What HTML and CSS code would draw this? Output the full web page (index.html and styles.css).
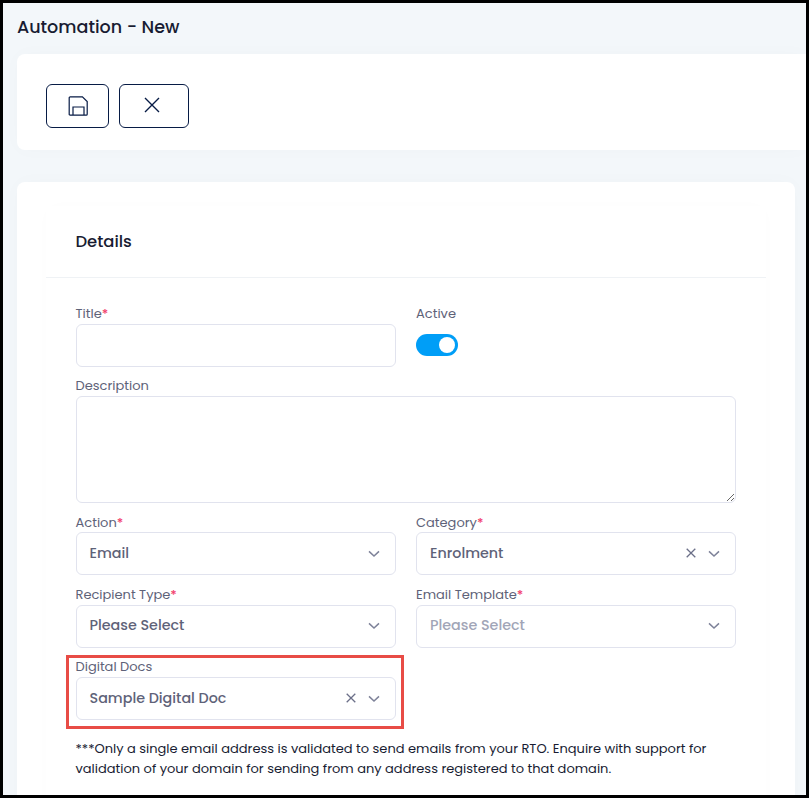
FILE: index.html
```html
<!DOCTYPE html>
<html lang="en">
<head>
<meta charset="utf-8">
<title>Automation - New</title>
<link rel="stylesheet" href="styles.css">
</head>
<body>
<svg class="defs" width="0" height="0">
  <symbol id="chevron" viewBox="0 0 12 8"><path d="M1 1.4 6 6 11 1.4" fill="none" stroke="currentColor" stroke-width="1.5"/></symbol>
  <symbol id="clear" viewBox="0 0 10 10"><path d="M.7.7 9.3 9.3M9.3.7.7 9.3" fill="none" stroke="currentColor" stroke-width="1.3"/></symbol>
</svg>
<div class="app">
  <h1>Automation - New</h1>
  <section class="toolbar">
    <button class="tool save" aria-label="Save"><svg width="20" height="20" viewBox="0 0 20 20"><path d="M2.2.8H14.4L19.2 5.5V18.2Q19.2 19.2 18.2 19.2H2.2Q1.2 19.2 1.2 18.2V1.8Q1.2.8 2.2.8ZM5 19.2V11H16V19.2" fill="none" stroke="currentColor" stroke-width="1.2"/></svg></button>
    <button class="tool close" aria-label="Close"><svg width="16" height="16" viewBox="0 0 16 16"><path d="M1 1 15 15M15 1 1 15" fill="none" stroke="currentColor" stroke-width="1.4"/></svg></button>
  </section>
  <section class="page">
    <div class="panel">
      <header><h2>Details</h2></header>
      <div class="form">
        <div class="field"><label>Title<b>*</b></label><div class="control"></div></div>
        <div class="field right"><label>Active</label><div class="toggle"></div></div>
        <div class="field wide"><label>Description</label><textarea aria-label="Description"></textarea></div>
        <div class="field"><label>Action<b>*</b></label><div class="control"><span class="value">Email</span><svg class="chev"><use href="#chevron"/></svg></div></div>
        <div class="field right"><label>Category<b>*</b></label><div class="control"><span class="value">Enrolment</span><svg class="clear"><use href="#clear"/></svg><svg class="chev"><use href="#chevron"/></svg></div></div>
        <div class="field"><label>Recipient Type<b>*</b></label><div class="control"><span class="value">Please Select</span><svg class="chev"><use href="#chevron"/></svg></div></div>
        <div class="field right"><label>Email Template<b>*</b></label><div class="control"><span class="value muted">Please Select</span><svg class="chev"><use href="#chevron"/></svg></div></div>
        <div class="field marked"><label>Digital Docs</label><div class="control"><span class="value">Sample Digital Doc</span><svg class="clear"><use href="#clear"/></svg><svg class="chev"><use href="#chevron"/></svg></div></div>
      </div>
      <p class="note">***Only a single email address is validated to send emails from your RTO. Enquire with support for<br>validation of your domain for sending from any address registered to that domain.</p>
    </div>
  </section>
</div>
</body>
</html>
```
FILE: styles.css
```css
* { box-sizing: border-box; }
body { margin: 0; font-family: Poppins, Inter, sans-serif; color: #181c32; }
.defs { position: absolute; }
.app { height: 798px; border: 3px solid #000; background: #f3f7fa; overflow: hidden; padding-left: 14px; }
h1, h2, p { margin: 0; font-weight: 500; white-space: nowrap; }
h1 { height: 51px; font-size: 17.55px; line-height: 48px; }
.toolbar { height: 96px; padding: 30px 29px; display: flex; gap: 10px; background: #fff; border-radius: 8px 0 0 8px; box-shadow: 0 0 20px rgba(76, 87, 125, .02); }
.tool { height: 44px; padding: 0; display: flex; align-items: center; justify-content: center; border: 1px solid #071b45; border-radius: 6px; background: #fff; color: #071b45; }
.save { width: 63px; }
.close { width: 70px; padding: 0 4px 1.5px 0; }
.page { width: 778px; height: 640px; margin-top: 32px; padding: 24px 29px; background: #fff; border-radius: 8px; box-shadow: 0 0 20px rgba(76, 87, 125, .02); }
.panel { width: 720px; height: 640px; border-radius: 8px; box-shadow: 0 0 20px rgba(76, 87, 125, .01); }
.panel header { height: 72px; border-bottom: 1px solid #eff2f5; padding-left: 29.5px; }
h2 { font-size: 16.4px; line-height: 71px; }
.form { padding: 25.6px 30px 0; display: grid; grid-template-columns: 320px 320px; column-gap: 20px; row-gap: 9.4px; }
.field { min-width: 0; }
.wide { grid-column: span 2; }
label { display: block; height: 20px; padding-top: .2px; margin-left: -.5px; font-size: 13px; line-height: 20px; color: #5e6278; white-space: nowrap; }
.right label { margin-left: 0; }
label b { color: #f1416c; font-weight: 500; }
.control { height: 43px; border: 1px solid #e1e3ee; border-radius: 6px; display: flex; align-items: center; padding: 0 15px 1px 12.5px; color: #5e6278; }
.right .control { padding-left: 13px; }
.value { flex: 1; font-size: 14.3px; font-weight: 500; white-space: nowrap; }
.muted { color: #a1a5b7; }
.chev { width: 12px; height: 8px; margin-top: 1px; color: #7e8299; }
.clear { width: 10px; height: 10px; margin: 0 12px 0 0; color: #6b6f88; }
.toggle { width: 42px; height: 22px; margin-top: 10px; border-radius: 11px; background: #009ef7; padding: 3px 3px 3px 23px; }
.toggle::before { content: ""; display: block; width: 16px; height: 16px; border-radius: 50%; background: #fff; }
textarea { display: block; width: 660px; height: 107px; border: 1px solid #e1e3ee; border-radius: 6px; outline: none; resize: vertical; background: #fff; }
.marked { position: relative; }
.marked::after { content: ""; position: absolute; inset: -2px -8px -9px -10px; border: 3px solid #e84c46; }
.note { margin: 18.6px 0 0 29.5px; font-size: 13px; line-height: 20px; font-weight: 400; }
```
